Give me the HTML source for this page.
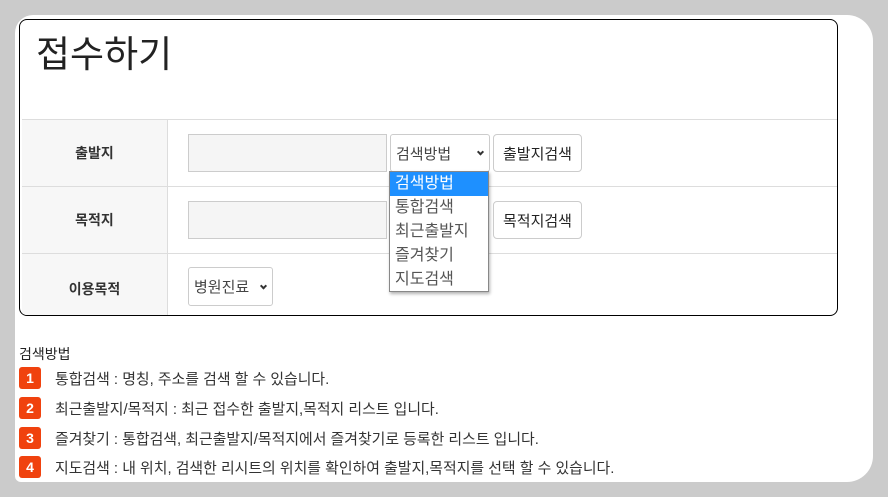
<!DOCTYPE html>
<html><head><meta charset="utf-8"><style>
*{margin:0;padding:0;box-sizing:border-box}
body{width:888px;height:497px;background:#cbcbcb;font-family:"Liberation Sans","Noto Sans CJK KR",sans-serif;position:relative;overflow:hidden}
.panel{position:absolute;left:15px;top:15px;width:858px;height:467px;background:#fff;border-radius:18px 26px 26px 6px}
.box{position:absolute;left:19px;top:19px;width:819px;height:297px;border:1px solid #000;border-radius:8px;overflow:hidden;background:#fff}
h1{position:absolute;left:16px;top:4px;font-size:37px;font-weight:normal;color:#222}
.row{position:absolute;left:2px;right:0;border-top:1px solid #ddd}
.lab{position:absolute;left:0;top:0;bottom:0;width:146px;background:#f7f7f7;border-right:1px solid #ddd;font-size:14px;font-weight:bold;color:#333;display:flex;align-items:center;justify-content:center}
.inp{position:absolute;left:166px;width:199px;height:38px;background:#f5f5f5;border:1px solid #ccc}
.sel{position:absolute;background:#fff;border:1px solid #ccc;border-radius:3px;font-size:15px;color:#444;padding-left:5px;display:flex;align-items:center}
.btn{position:absolute;background:#fff;border:1px solid #ccc;border-radius:4px;font-size:15px;color:#222;display:flex;align-items:center;justify-content:center}
.chev{position:absolute;right:6px;top:50%;width:5px;height:5px;border-right:2px solid #333;border-bottom:2px solid #333;transform:translateY(-70%) rotate(45deg)}
.dd{position:absolute;left:389px;top:171px;width:100px;height:121px;background:#fff;border:1px solid #888;box-shadow:1px 2px 3px rgba(0,0,0,.3);font-size:16px;color:#555}
.dd div{height:24px;line-height:24px;padding-left:5px}
.dd .on{background:#1e90ff;color:#fff}
.guide{position:absolute;left:19px;top:344px;font-size:14px;color:#222}
.it{position:absolute;left:19px;font-size:14.9px;color:#333;height:22px;display:flex;align-items:center;white-space:nowrap}
.n{width:22px;height:22px;background:#f0420e;color:#fff;border-radius:3px;font-weight:bold;font-size:14px;display:flex;align-items:center;justify-content:center;margin-right:14px}
</style></head><body>
<div class="panel"></div>
<div class="box">
<h1>접수하기</h1>
<div class="row" style="top:99px;height:67px"><div class="lab">출발지</div><div class="inp" style="top:14px"></div>
<div class="sel" style="left:368px;top:14px;width:100px;height:38px">검색방법<span class="chev"></span></div>
<div class="btn" style="left:471px;top:14px;width:89px;height:38px">출발지검색</div></div>
<div class="row" style="top:166px;height:67px"><div class="lab">목적지</div><div class="inp" style="top:14px"></div>
<div class="btn" style="left:471px;top:14px;width:89px;height:38px">목적지검색</div></div>
<div class="row" style="top:233px;height:70px"><div class="lab">이용목적</div>
<div class="sel" style="left:166px;top:13px;width:85px;height:39px">병원진료<span class="chev"></span></div></div>
</div>
<div class="dd"><div class="on">검색방법</div><div>통합검색</div><div>최근출발지</div><div>즐겨찾기</div><div>지도검색</div></div>
<div class="guide">검색방법</div>
<div class="it" style="top:367px"><span class="n">1</span>통합검색 : 명칭, 주소를 검색 할 수 있습니다.</div>
<div class="it" style="top:397px"><span class="n">2</span>최근출발지/목적지 : 최근 접수한 출발지,목적지 리스트 입니다.</div>
<div class="it" style="top:427px"><span class="n">3</span>즐겨찾기 : 통합검색, 최근출발지/목적지에서 즐겨찾기로 등록한 리스트 입니다.</div>
<div class="it" style="top:456px"><span class="n">4</span>지도검색 : 내 위치, 검색한 리시트의 위치를 확인하여 출발지,목적지를 선택 할 수 있습니다.</div>
</body></html>
